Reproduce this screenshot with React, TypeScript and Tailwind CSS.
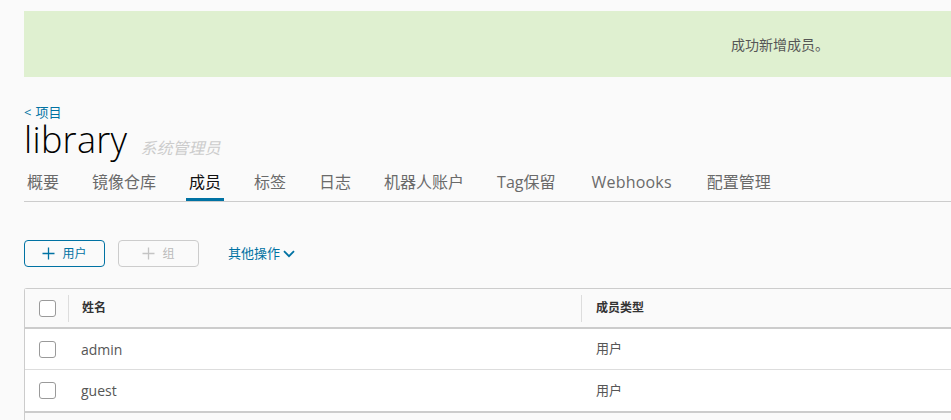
import React from "react";

const font = { fontFamily: "'Open Sans', 'Noto Sans CJK SC', sans-serif" };

function Checkbox() {
  return <div className="w-[17px] h-[17px] rounded-[3px] border border-[#9a9a9a] bg-white" />;
}

export default function App() {
  const tabs = [
    { t: "概要", c: "px-[3px]" },
    { t: "镜像仓库", c: "px-[3px]" },
    { t: "成员", c: "px-[3px]" },
    { t: "标签", c: "px-[3px]" },
    { t: "日志", c: "px-[3px]" },
    { t: "机器人账户", c: "px-[3px]" },
    { t: "Tag保留", c: "pl-[3px] pr-[6px]" },
    { t: "Webhooks", c: "pl-[3px] pr-[5px] tracking-[0.2px]" },
    { t: "配置管理", c: "px-[3px]" },
  ];
  return (
    <div className="w-[951px] h-[420px] overflow-hidden bg-[#fafafa]" style={font}>
      <div className="w-[1300px] pl-[24px]">
        <div className="mt-[11px] h-[66px] bg-[#dff0d0] flex items-center pl-[707px] text-[14px] text-[#565656]">
          成功新增成员。
        </div>
        <div className="mt-[26px] h-[18px] flex text-[13px] leading-[18px] text-[#0072a3]">
          <div>&lt;</div>
          <div className="ml-[4px]">项目</div>
        </div>
        <div className="flex items-end h-[40px] mt-[-1px]">
          <div className="text-[36px] leading-[40px] h-[40px] font-light text-black tracking-[0.3px]">library</div>
          <div className="ml-[13px] mb-[1px] text-[16px] leading-[22px] italic text-[#cccccc]">系统管理员</div>
        </div>
        <div className="w-[927px] flex gap-[27px] border-b border-[#cccccc] mt-[4px] h-[38px]">
          {tabs.map((x, i) => (
            <div
              key={x.t}
              className={
                x.c +
                " pt-[7px] h-[37px] text-[16px] leading-[22px] " +
                (i === 2 ? "text-[#111] border-b-[3px] border-[#0072a3]" : "text-[#6a6a6a]")
              }
            >
              {x.t}
            </div>
          ))}
        </div>
        <div className="mt-[38px] flex items-center h-[27px]">
          <div className="w-[81px] h-[27px] rounded-[4px] border border-[#0072a3] flex items-center justify-center text-[#0072a3] text-[12px] gap-[7px]">
            <svg width="13" height="13" viewBox="0 0 13 13"><path d="M6.5 0.5v12M0.5 6.5h12" stroke="#0072a3" strokeWidth="1.3" /></svg>
            <span>用户</span>
          </div>
          <div className="ml-[13px] w-[81px] h-[27px] rounded-[4px] border border-[#cccccc] flex items-center justify-center text-[#bbbbbb] text-[12px] gap-[7px]">
            <svg width="13" height="13" viewBox="0 0 13 13"><path d="M6.5 0.5v12M0.5 6.5h12" stroke="#c4c4c4" strokeWidth="1.3" /></svg>
            <span>组</span>
          </div>
          <div className="ml-[29px] flex items-center text-[13px] text-[#0072a3] gap-[3px]">
            <span>其他操作</span>
            <svg width="12" height="8" viewBox="0 0 12 8"><path d="M1 1.2l5 5 5-5" stroke="#0072a3" strokeWidth="1.8" fill="none" /></svg>
          </div>
        </div>
        <div className="mt-[21px] border-t border-l border-[#cccccc] rounded-tl-[3px] bg-white">
          <div className="h-[40px] flex items-center bg-[#fafafa] border-b-2 border-[#cccccc] text-[12px] font-semibold text-[#333]">
            <div className="w-[43px] flex justify-center pl-[1px]"><Checkbox /></div>
            <div className="w-px h-[27px] bg-[#dddddd]" />
            <div className="w-[512px] pl-[13px]">姓名</div>
            <div className="w-px h-[27px] bg-[#dddddd]" />
            <div className="pl-[14px]">成员类型</div>
          </div>
          {["admin", "guest"].map((n, i) => (
            <div key={n} className={"h-[41px] flex items-center text-[14px] text-[#565656] " + (i === 0 ? "border-b border-[#dddddd]" : "")}>
              <div className="w-[43px] flex justify-center pl-[1px]"><Checkbox /></div>
              <div className="w-[514px] pl-[13px]">{n}</div>
              <div className="pl-[14px] text-[13px]">用户</div>
            </div>
          ))}
          <div className="h-[2px] bg-[#cccccc]" />
          <div className="h-[20px] bg-[#fafafa]" />
        </div>
      </div>
    </div>
  );
}
